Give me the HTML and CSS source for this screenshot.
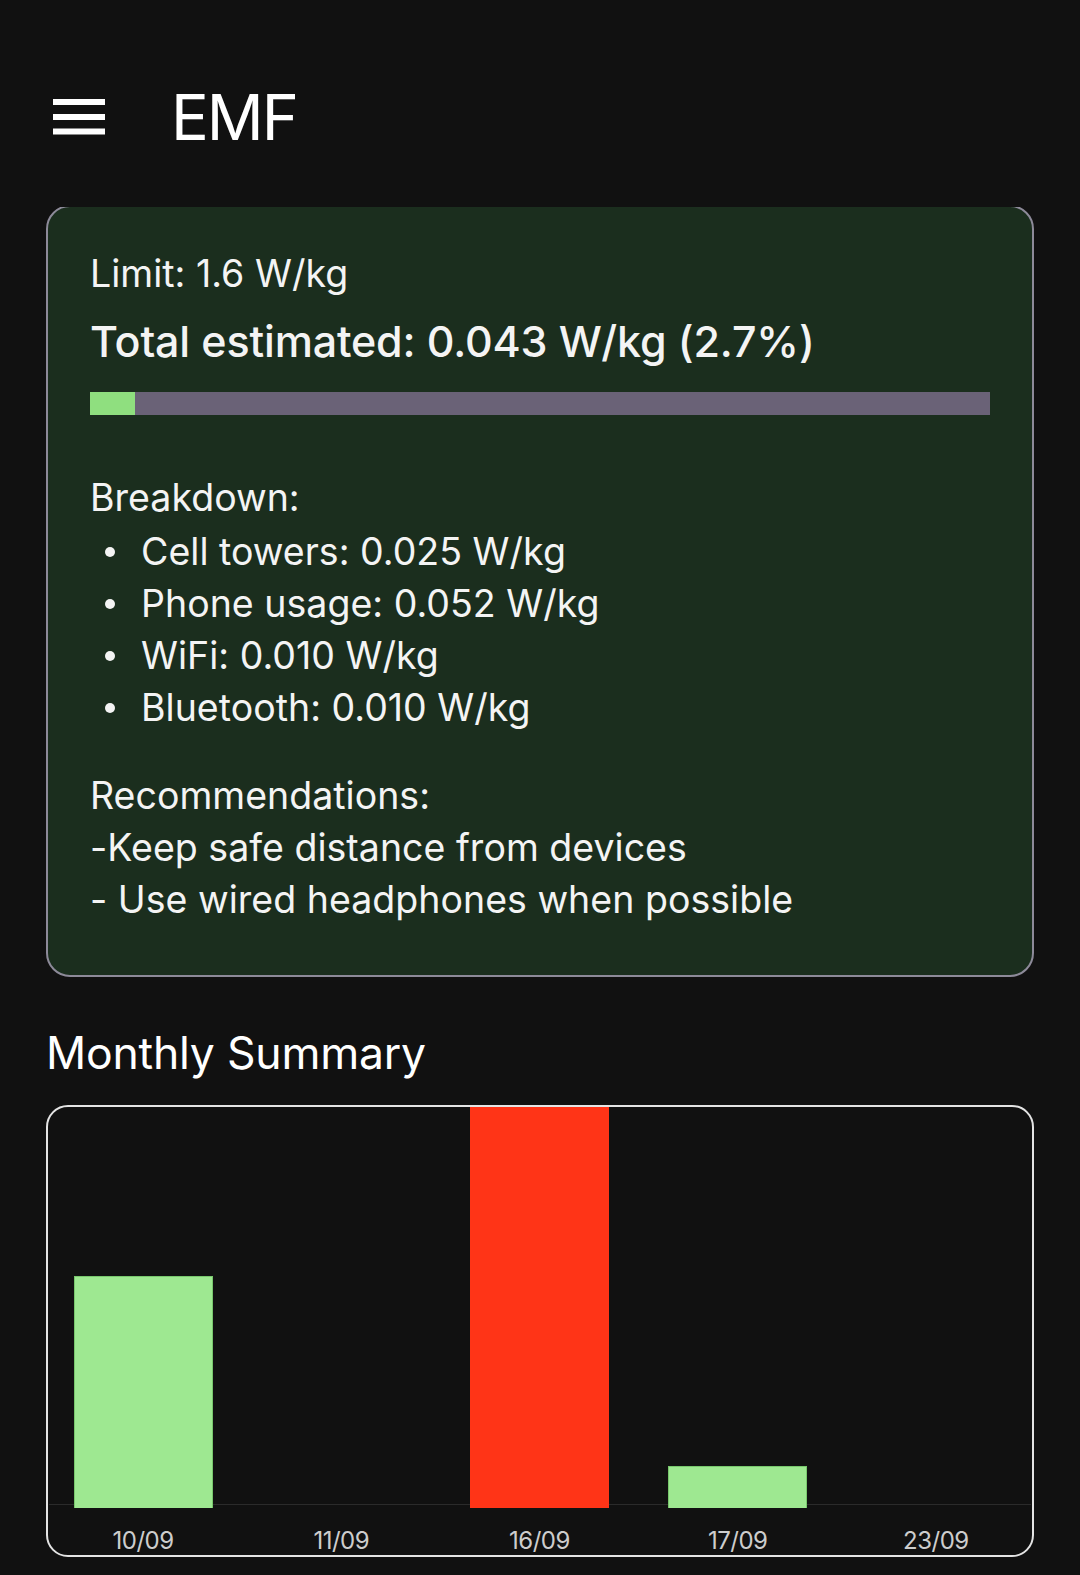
FILE: index.html
```html
<!DOCTYPE html>
<html lang="en">
<head>
<meta charset="utf-8">
<title>EMF</title>
<link rel="stylesheet" href="styles.css">
</head>
<body>
<div class="screen">
  <header class="appbar">
    <div class="appbar-row">
      <svg class="menu" width="52" height="36" viewBox="0 0 52 36" aria-hidden="true">
        <rect x="0" y="0" width="52" height="6" fill="#ffffff"/>
        <rect x="0" y="15" width="52" height="6" fill="#ffffff"/>
        <rect x="0" y="29.5" width="52" height="6" fill="#ffffff"/>
      </svg>
      <h1 class="title">EMF</h1>
    </div>
  </header>
  <main class="content">
    <section class="card">
      <p class="line">Limit: 1.6 W/kg</p>
      <p class="total">Total estimated: 0.043 W/kg (2.7%)</p>
      <div class="progress"><div class="progress-fill" style="width:5%"></div></div>
      <p class="line breakdown-title">Breakdown:</p>
      <ul class="breakdown">
        <li><span class="dot"></span>Cell towers: 0.025 W/kg</li>
        <li><span class="dot"></span>Phone usage: 0.052 W/kg</li>
        <li><span class="dot"></span>WiFi: 0.010 W/kg</li>
        <li><span class="dot"></span>Bluetooth: 0.010 W/kg</li>
      </ul>
      <p class="line recs-title">Recommendations:</p>
      <p class="line">-Keep safe distance from devices</p>
      <p class="line">- Use wired headphones when possible</p>
    </section>
    <h2 class="section-title">Monthly Summary</h2>
    <div class="chart">
      <div class="plot-wrap">
        <div class="plot">
          <div class="col"><div class="bar ok" style="height:232px"></div></div>
          <div class="col"></div>
          <div class="col"><div class="bar high" style="height:401px"></div></div>
          <div class="col"><div class="bar ok" style="height:42px"></div></div>
          <div class="col"></div>
        </div>
      </div>
      <div class="labels">
        <span>10/09</span>
        <span>11/09</span>
        <span>16/09</span>
        <span>17/09</span>
        <span>23/09</span>
      </div>
    </div>
  </main>
</div>
</body>
</html>
```

FILE: styles.css
```css
* {
  box-sizing: border-box;
}

html, body {
  margin: 0;
  padding: 0;
  background: #111111;
}

body {
  font-family: Inter, "Noto Sans", "Liberation Sans", sans-serif;
  color: #f4f4f4;
}

.screen {
  width: 1080px;
  min-height: 1575px;
  background: #111111;
}

.appbar {
  display: flow-root;
  height: 207px;
  background: #111111;
}

.appbar-row {
  display: flex;
  align-items: center;
  height: 60px;
  margin-top: 87px;
  padding-left: 53px;
}

.menu {
  display: block;
  flex: none;
}

.title {
  margin: 0 0 0 66px;
  font-size: 63px;
  line-height: 60px;
  font-weight: 400;
  color: #ffffff;
  letter-spacing: -2px;
}

.content {
  padding: 0 46px;
  overflow: hidden;
}

.card {
  margin-top: -2px;
  border: 2px solid #8d8a99;
  border-radius: 24px;
  background: #1b2e1e;
  padding: 41px 42px 49px;
}

.line {
  margin: 0;
  font-size: 37.5px;
  line-height: 52px;
  font-weight: 400;
  letter-spacing: 0.02px;
}

.total {
  margin: 11px 0 0;
  font-size: 43px;
  line-height: 60px;
  font-weight: 500;
  letter-spacing: -0.15px;
}

.progress {
  margin-top: 21px;
  height: 23px;
  background: #6a6277;
}

.progress-fill {
  height: 100%;
  background: #8fdf7f;
}

.breakdown-title {
  margin-top: 57px;
}

.breakdown {
  list-style: none;
  margin: 2px 0 0;
  padding: 0;
}

.breakdown li {
  display: flex;
  align-items: center;
  font-size: 37.5px;
  line-height: 52px;
  letter-spacing: 0.02px;
}

.dot {
  flex: none;
  width: 10px;
  height: 10px;
  border-radius: 50%;
  background: #f4f4f4;
  margin-left: 15px;
  margin-right: 26px;
}

.recs-title {
  margin-top: 36px;
}

.section-title {
  margin: 45px 0 0;
  font-size: 44.5px;
  line-height: 62px;
  font-weight: 400;
  color: #ffffff;
  letter-spacing: -0.2px;
}

.chart {
  margin-top: 21px;
  border: 2.5px solid #e4e4e4;
  border-radius: 22px;
  background: #111111;
}

.plot-wrap {
  margin: 0 1px;
  border-bottom: 1px solid #2b2b2b;
}

.plot {
  display: grid;
  grid-template-columns: repeat(5, 1fr);
  height: 397px;
  margin: 0 -4px 0 -5px;
}

.col {
  display: flex;
  align-items: flex-end;
  justify-content: center;
}

.bar {
  width: 139px;
  flex: none;
}

.bar.ok {
  background: #9ee891;
  border: 1px solid #78c86c;
  border-bottom: none;
}

.bar.high {
  background: #ff3417;
}

.labels {
  display: grid;
  grid-template-columns: repeat(5, 1fr);
  margin: 0 -3px 0 -4px;
  padding-top: 22px;
  height: 50px;
}

.labels span {
  text-align: center;
  font-size: 24px;
  line-height: 28px;
  color: #cdcdcd;
  letter-spacing: -0.5px;
}
```
